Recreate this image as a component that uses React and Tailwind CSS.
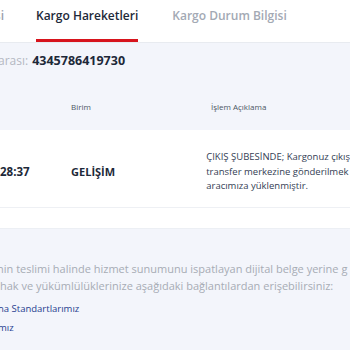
export default function App() {
  return (
    <div className="w-[350px] h-[350px] overflow-hidden bg-[#f3f5fb] font-['Open_Sans',sans-serif] text-[#1d2939]">
      <div className="h-[43px] bg-white border-b border-[#e8ebf0] flex items-stretch">
        <div className="w-[4px] overflow-hidden flex justify-end">
          <span className="pt-[7px] text-[12px] font-semibold text-[#9aa1ad] whitespace-nowrap">Gönderi Bilgisi</span>
        </div>
        <div className="ml-[32px] flex flex-col justify-between">
          <span className="pt-[7px] text-[12px] font-semibold text-[#1d2939] whitespace-nowrap">Kargo Hareketleri</span>
          <div className="h-[3px] bg-[#d7141d]"></div>
        </div>
        <div className="ml-[34px]">
          <span className="block pt-[7px] text-[12px] font-semibold text-[#a3a9b4] whitespace-nowrap">Kargo Durum Bilgisi</span>
        </div>
      </div>

      <div className="h-[87px] flex flex-col">
        <div className="mt-[9px] flex items-baseline whitespace-nowrap -ml-[2px]">
          <span className="text-[12px] text-[#b3b8c2]">arası:</span>
          <span className="ml-[4px] text-[12.5px] font-bold text-[#1d2939]">4345786419730</span>
        </div>
        <div className="mt-[30px] flex text-[8px] text-[#4b5563]">
          <span className="ml-[71px]">Birim</span>
          <span className="ml-[120px]">İşlem Açıklama</span>
        </div>
      </div>

      <div className="bg-white">
        <div className="h-[78px] pt-[7px] flex items-center border-b border-[#eef0f4]">
          <span className="w-[72px] text-[11.5px] font-bold whitespace-nowrap">28:37</span>
          <span className="w-[137px] text-[11px] font-bold whitespace-nowrap">GELİŞİM</span>
          <p className="text-[9.5px] leading-[14.5px] text-[#344054] whitespace-nowrap">
            ÇIKIŞ ŞUBESİNDE; Kargonuz çıkış<br />transfer merkezine gönderilmek<br />aracımıza yüklenmiştir.
          </p>
        </div>
        <div className="h-[21px] border-b border-[#eceff4]"></div>
      </div>

      <div className="pt-[31px] whitespace-nowrap">
        <p className="text-[11px] leading-[17px] text-[#a7acb5] -ml-[3px]">nin teslimi halinde hizmet sunumunu ispatlayan dijital belge yerine g</p>
        <p className="text-[11px] leading-[17px] text-[#a7acb5]">hak ve yükümlülüklerinize aşağıdaki bağlantılardan erişebilirsiniz:</p>
        <p className="mt-[5px] text-[9.5px] font-medium leading-[19px] text-[#1f3d8f] -ml-[2px]">na Standartlarımız</p>
        <p className="text-[9.5px] font-medium leading-[19px] text-[#1f3d8f] -ml-[2px]">mız</p>
      </div>
    </div>
  );
}
